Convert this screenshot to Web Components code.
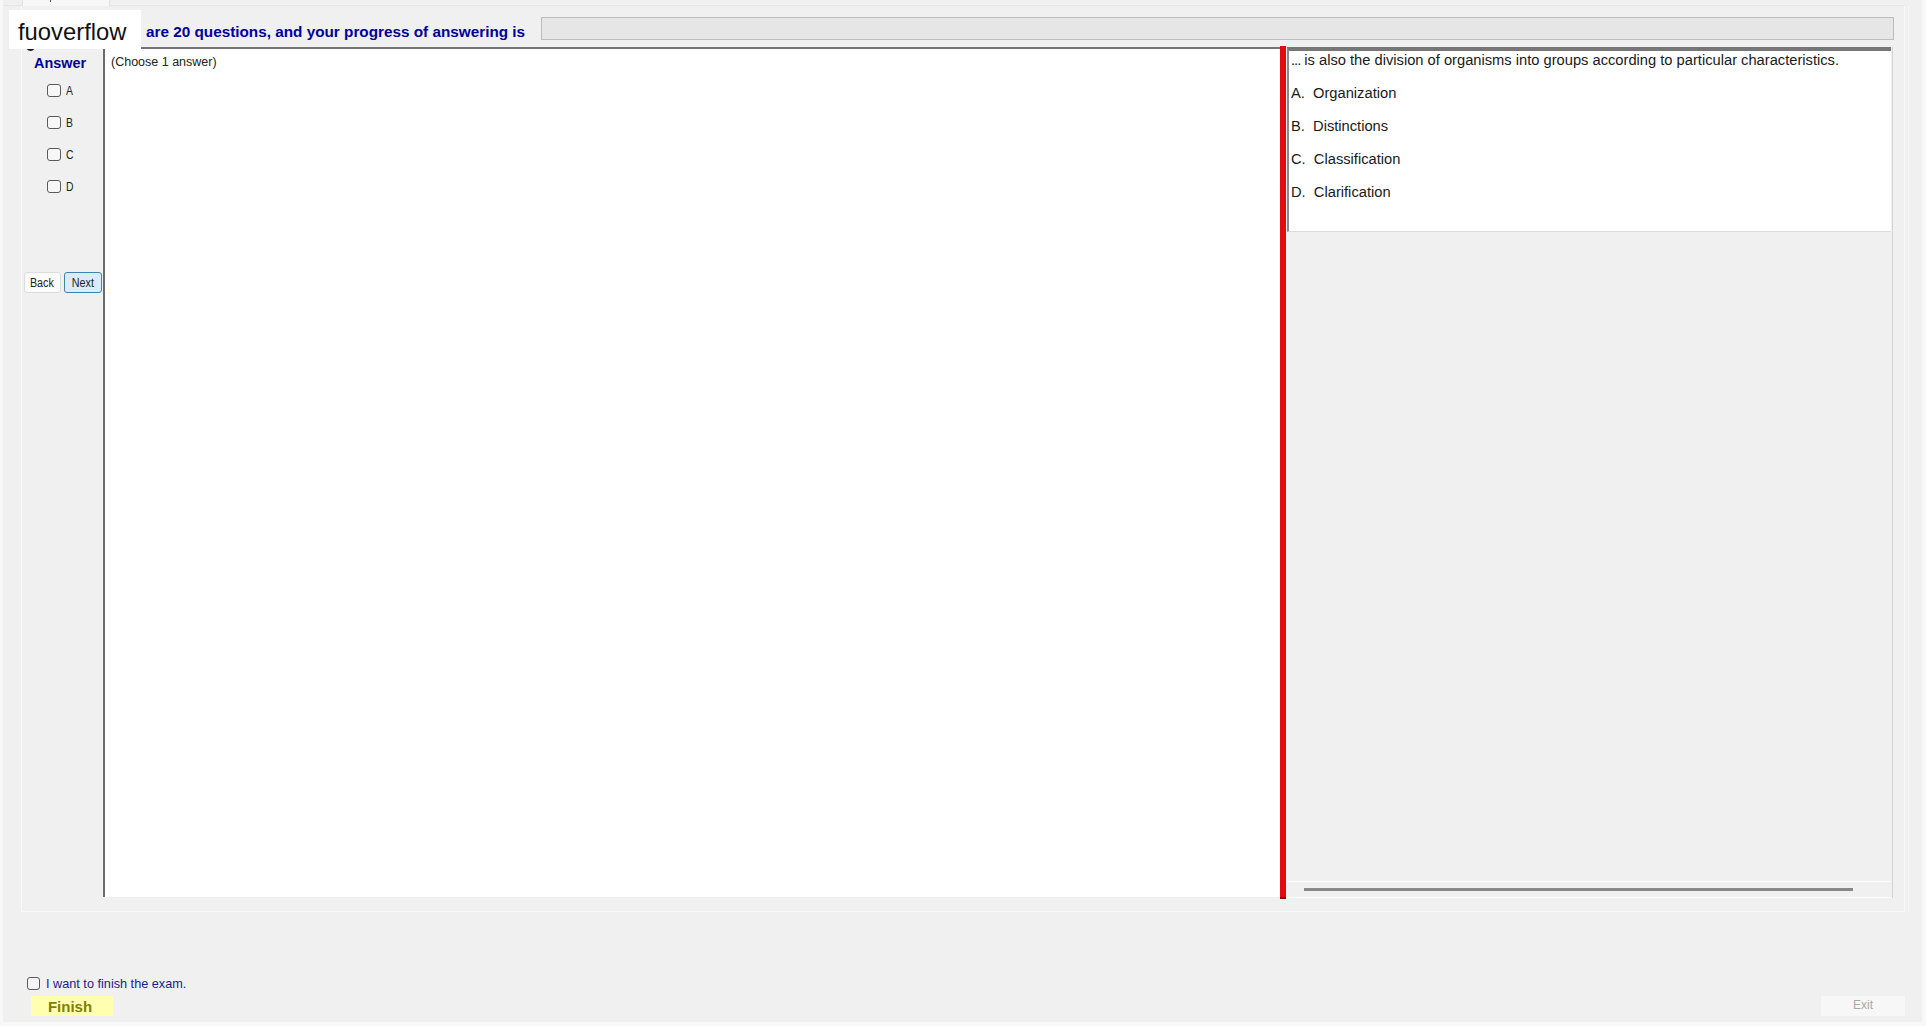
<!DOCTYPE html>
<html lang="en"><head><meta charset="utf-8"><title>Exam</title>
<style>
html,body{margin:0;padding:0;background:#f0f0f0;overflow:hidden}
body{font-family:"Liberation Sans",Arial,sans-serif}
</style></head><body>
<exam-app></exam-app>
<script>
function def(name,html){
  customElements.define(name,class extends HTMLElement{
    constructor(){super();this.attachShadow({mode:'open'}).innerHTML=html;}
  });
}
def('exam-tabstrip',`<style>
:host{display:block;height:6px;width:1902px;border-bottom:1px solid #e6e6e6;box-sizing:border-box;padding-left:19px}
.tab{width:88px;height:6px;background:#f7f7f7;border:solid #e2e2e2;border-width:0 1px;box-sizing:border-box;padding-left:27px}
.tick{display:block;width:1px;height:2px;background:#555}
</style><div class="tab"><span class="tick"></span></div>`);
def('exam-progress',`<style>
:host{display:block;flex:none;width:1353px;height:23px;background:#e6e6e6;border:1px solid #bcbcbc;box-sizing:border-box}
</style>`);
def('exam-header',`<style>
:host{display:flex;align-items:center;height:23px;margin:0 0 7px;padding-left:124px;
 color:#00009a;font:bold 15.3px "Liberation Sans",Arial,sans-serif;white-space:nowrap}
.t{width:395px;flex:none;padding-top:7px}
</style><span class="t"><slot></slot></span><exam-progress></exam-progress>`);
def('logo-badge',`<style>
:host{position:absolute;left:6px;top:10px;width:132px;height:39px;display:block;background:#fff;
 font:23.8px/44px "Liberation Sans",Arial,sans-serif;color:#111}
.txt{position:relative;display:block;padding-left:9px}
.dot{position:absolute;left:16px;top:28px;width:11px;height:13px;border-radius:50%;background:#1a1a1a;z-index:-1}
</style><span class="dot"></span><span class="txt"><slot></slot></span>`);
def('answer-option',`<style>
:host{display:flex;align-items:center;height:32px;padding-left:24.5px;
 font:13px "Liberation Sans",Arial,sans-serif;color:#222}
input{appearance:none;-webkit-appearance:none;margin:0 5px 0 0;width:14px;height:13px;box-sizing:border-box;
 border:1px solid #5a5a5a;border-radius:3px;background:#f7f7f7}
span{display:inline-block;transform:scaleX(.8);transform-origin:left center}
</style><input type="checkbox"><span><slot></slot></span>`);
def('exam-button',`<style>
:host{display:flex;align-items:center;justify-content:center;box-sizing:border-box;height:21px;width:37px;
 border:1px solid #dcdcdc;border-radius:3px;background:#fbfbfb;font:12.5px "Liberation Sans",Arial,sans-serif;color:#222}
:host([primary]){width:38px;background:#d8edf9;border-color:#3f84ad}
span{display:inline-block;transform:scaleX(.86)}
</style><span><slot></slot></span>`);
def('answer-panel',`<style>
:host{display:block;padding-top:8px;box-sizing:border-box}
h2{margin:0 0 3px;padding-left:12px;height:16px;font:bold 14.4px/16px "Liberation Sans",Arial,sans-serif;color:#00009a}
.nav{display:flex;gap:3px;margin:70px 0 0 1.5px}
</style><h2>Answer</h2>
<answer-option>A</answer-option><answer-option>B</answer-option><answer-option>C</answer-option><answer-option>D</answer-option>
<div class="nav"><exam-button>Back</exam-button><exam-button primary>Next</exam-button></div>`);
def('choose-pane',`<style>
:host{display:block;margin:0 0 2px;box-sizing:border-box;background:#fff;border-top:2px solid #757575;border-left:2px solid #6a6a6a;
 padding:5px 0 0 6px;font:12.5px/16px "Liberation Sans",Arial,sans-serif;color:#222}
</style><slot></slot>`);
def('red-splitter',`<style>
:host{display:block;background:#e30b0b;border-bottom:2px solid #8f0b0b;box-sizing:border-box;margin:-1px 1px 0 0}
</style>`);
def('question-pane',`<style>
:host{display:flex;flex-direction:column;min-height:0;margin-bottom:1px;border-right:1px solid #d4d4d4;box-sizing:border-box}
.q{box-sizing:border-box;height:185px;margin-right:1px;background:#fff;border-top:4px solid #777;border-left:2px solid #8a8a8a;border-bottom:1px solid #dcdcdc;
 padding:1px 0 0 2px;font:14.7px/17px "Liberation Sans",Arial,sans-serif;color:#1a1a1a}
.q ::slotted(*){display:block;margin:0 0 16px;}
.fill{flex:1}
.sb{box-sizing:border-box;height:17px;border-top:1px solid #fbfbfb;border-bottom:1px solid #fbfbfb;margin-right:1px;padding:6px 38px 0 17px}
.sb i{display:block;height:2.5px;background:#888}
</style><div class="q"><slot></slot></div><div class="fill"></div><div class="sb"><i></i></div>`);
def('exam-panel',`<style>
:host{display:grid;grid-template-columns:81px 1177px 7px 606px;grid-template-rows:852px;}
</style><answer-panel></answer-panel><choose-pane><slot name="choose"></slot></choose-pane><red-splitter></red-splitter><question-pane><slot name="q"></slot></question-pane>`);
def('exam-page',`<style>
:host{display:block;margin-left:18px;width:1884px;height:906px;box-sizing:border-box;padding-top:11px;
 border:solid #f9f9f9;border-width:0 1px 1px;box-shadow:3px 0 0 #f0f0f0,4px 0 0 #f7f7f7}
</style><slot></slot>`);
def('finish-bar',`<style>
:host{display:block;padding-top:63px;color:#1c1c8c;font:12.7px/20px "Liberation Sans",Arial,sans-serif}
.c{display:flex;align-items:center;height:21px;padding-left:24px;gap:6px}
.c span{margin-top:-3px;position:relative;top:0}
input{appearance:none;-webkit-appearance:none;margin:-4px 0 0;width:13px;height:13px;box-sizing:border-box;border:1px solid #5a5a5a;border-radius:3px;background:#f4f4f4}
.r{display:flex;justify-content:space-between;align-items:flex-start;padding-left:28px;width:1874px}
.f{box-sizing:border-box;width:82px;height:20px;padding-right:4px;background:#ffffaf;color:#808000;font:bold 15px/21px "Liberation Sans",Arial,sans-serif;text-align:center}
.e{width:84px;height:20px;background:#f7f7f7;color:#a8a8a8;font:12px/19px "Liberation Sans",Arial,sans-serif;text-align:center}
</style><div class="c"><input type="checkbox"><span><slot></slot></span></div>
<div class="r"><div class="f">Finish</div><div class="e">Exit</div></div>`);
def('exam-app',`<style>
:host{display:block;position:relative;isolation:isolate;box-sizing:border-box;width:1926px;height:1026px;overflow:hidden;background:#f0f0f0;
 border-left:3px solid #f8f8f8;border-right:4px solid #f8f8f8;border-bottom:4px solid #f8f8f8}
.dots{letter-spacing:-1px}
</style>
<exam-tabstrip></exam-tabstrip>
<exam-page>
<exam-header>are 20 questions, and your progress of answering is</exam-header>
<exam-panel>
 <span slot="choose">(Choose 1 answer)</span>
 <p slot="q"><span class="dots">...</span>&nbsp;is also the division of organisms into groups according to particular characteristics.</p>
 <p slot="q">A.&nbsp; Organization</p><p slot="q">B.&nbsp; Distinctions</p><p slot="q">C.&nbsp; Classification</p><p slot="q">D.&nbsp; Clarification</p>
</exam-panel>
</exam-page>
<finish-bar>I want to finish the exam.</finish-bar>
<logo-badge>fuoverflow</logo-badge>`);
</script></body></html>
